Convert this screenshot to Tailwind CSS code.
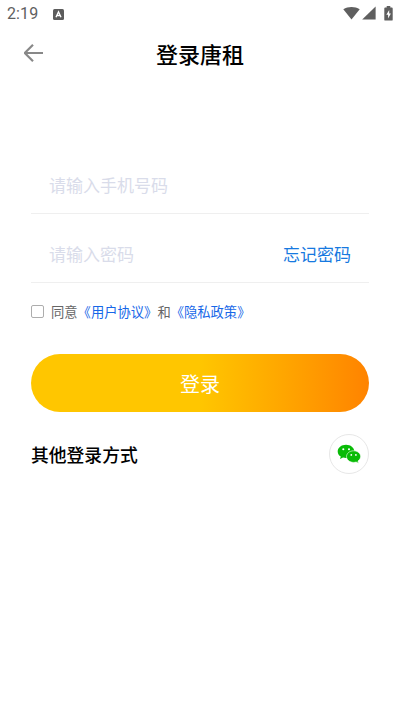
<!DOCTYPE html>
<html lang="zh-CN">
<head>
<meta charset="utf-8">
<title>登录唐租</title>
<script src="https://cdn.jsdelivr.net/npm/@tailwindcss/browser@4"></script>
</head>
<body class="w-[400px] h-[711px] overflow-hidden bg-white flex flex-col font-['Noto_Sans_CJK_SC',sans-serif]">
  <div class="h-7 flex items-center pl-[7px] pr-[6px] text-[#5f5f5f]">
    <span class="font-['Roboto',sans-serif] text-[16px] leading-7 tracking-[0.1px] w-[46px]">2:19</span>
    <svg class="size-[11px]" viewBox="0 0 11 11"><rect width="11" height="11" rx="1.500" fill="#5c5c5c"/><path d="M3 8.200 5.500 2.800 8 8.200M4 6.500h3" fill="none" stroke="#fff" stroke-width="1.400"/></svg>
    <svg class="ml-auto mb-[2px] w-[17px] h-[14px]" viewBox="0 0 17 14"><path d="M.3 3.200C5 .2 12 .2 16.700 3.200L8.500 13.600Z" fill="#5f5f5f"/></svg>
    <svg class="ml-[2px] mb-[2px] w-[14px] h-[14px]" viewBox="0 0 14 14"><path d="M13.600.4V13.600H.2Z" fill="#5f5f5f"/></svg>
    <svg class="ml-[8px] mr-[1px] mb-[2px] w-[9px] h-[15px]" viewBox="0 0 9 15"><path d="M2.700 0h3.600v1.600h1.500q.9 0 .9.9v11.200q0 .9-.9.9H1.200q-.9 0-.9-.9V2.500q0-.9.9-.9h1.500Z" fill="#5f5f5f"/><path d="M5.200 4 2.300 8.700h1.800v3.700l2.800-5H5.200Z" fill="#fff"/></svg>
  </div>
  <header class="h-[52px] grid grid-cols-[52px_1fr_52px] items-center">
    <svg class="ml-6 mb-[3px] w-5 h-[18px]" viewBox="0 0 20 18"><path d="M9 .8.8 9 9 17.200M.8 9H19" fill="none" stroke="#888" stroke-width="2.200"/></svg>
    <h1 class="mb-[2px] text-center text-[22px] leading-8 font-medium text-black">登录唐租</h1>
  </header>
  <main class="pl-[31px] pr-[31px] pt-[78px] flex flex-col">
    <div class="h-14 pb-[2px] pl-[18px] flex items-center border-b border-[#efefef] text-[17px] text-[#d9dcea]">请输入手机号码</div>
    <div class="h-[69px] pt-[12px] pl-[18px] pr-[18px] flex items-center justify-between border-b border-[#efefef] text-[17px]">
      <span class="text-[#d9dcea]">请输入密码</span>
      <span class="text-[#1679e0]">忘记密码</span>
    </div>
    <div class="mt-[19px] h-5 flex items-center text-[13.3px] leading-5 text-[#666]">
      <span class="size-[13px] mr-[7px] mb-[1px] border border-[#adadad] rounded-[2px]"></span>
      <span class="whitespace-nowrap">同意<span class="text-[#1767e8]">《用户协议》</span>和<span class="text-[#1767e8]">《隐私政策》</span></span>
    </div>
    <button class="mt-[32px] h-[58px] pt-[2px] rounded-full bg-linear-to-r from-[#ffc600] from-50% to-[#ff8300] text-[20px] text-white flex items-center justify-center">登录</button>
    <div class="mt-[22px] h-10 flex items-center justify-between">
      <span class="text-[17.8px] leading-6 font-medium text-black">其他登录方式</span>
      <span class="size-10 rounded-full border border-[#e7e7e7] flex items-center justify-center">
        <svg class="w-6 h-5" viewBox="0 0 24 20"><path d="M9 .8C4.400.8.7 3.700.7 7.400c0 2.100 1.200 4 3.100 5.200L3 15.100l3-1.500c1 .3 2 .4 3 .4 4.600 0 8.300-2.900 8.300-6.600S13.600.8 9 .8Z" fill="#09bb07"/><path d="M16.600 6.800c-4 0-7.100 2.600-7.100 5.800s3.100 5.800 7.100 5.800c.9 0 1.700-.1 2.500-.4l2.500 1.300-.7-2.200c1.700-1.100 2.700-2.700 2.700-4.500 0-3.200-3.100-5.800-7-5.800Z" fill="#09bb07" stroke="#fff" stroke-width=".6"/><g fill="#fff"><circle cx="6.300" cy="5.300" r="1.050"/><circle cx="12" cy="5.300" r="1.050"/><circle cx="14.300" cy="10.900" r=".9"/><circle cx="18.900" cy="10.900" r=".9"/></g></svg>
      </span>
    </div>
  </main>
</body>
</html>
